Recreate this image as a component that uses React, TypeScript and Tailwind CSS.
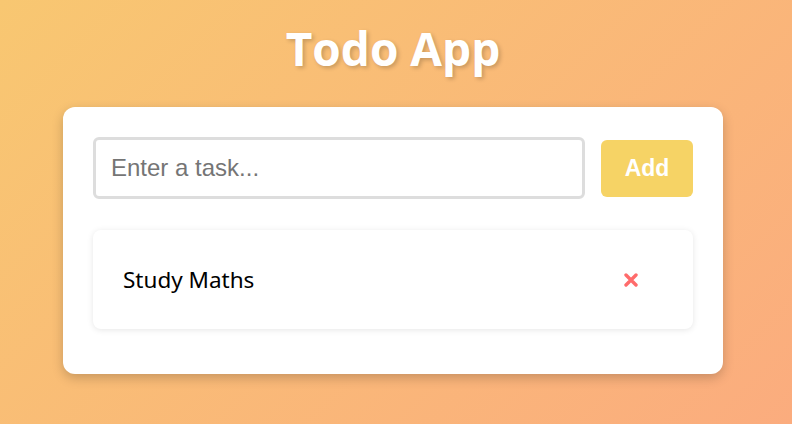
import React, { useState } from "react";

const App = () => {
  const [tasks, setTasks] = useState<string[]>(["Study Maths"]);
  const [text, setText] = useState("");

  const add = () => {
    if (!text.trim()) return;
    setTasks([...tasks, text.trim()]);
    setText("");
  };

  return (
    <div className="min-h-screen w-full bg-[linear-gradient(135deg,#f8c771,#fbac7e)] flex flex-col items-center pt-[20px] pr-[6px]">
      <h1
        className="text-white font-bold text-[46px] leading-[56px] [text-shadow:2px_2px_4px_rgba(0,0,0,0.2)]"
        style={{ fontFamily: '"Open Sans", sans-serif' }}
      >
        Todo App
      </h1>
      <div className="mt-[31px] w-[660px] bg-white rounded-[12px] shadow-[0_4px_12px_rgba(0,0,0,0.2)] px-[30px] pt-[30px] pb-[45px]">
        <div className="flex items-center gap-4">
          <input
            value={text}
            onChange={(e) => setText(e.target.value)}
            placeholder="Enter a task..."
            className="flex-1 h-[62px] border-[3px] border-[#dddddd] rounded-[6px] px-[15px] text-[24px] text-black placeholder:text-[#757575] outline-none"
            style={{ fontFamily: '"Liberation Sans", Arial, sans-serif' }}
          />
          <button
            onClick={add}
            className="w-[92px] h-[57px] bg-[#f6d365] text-white font-bold text-[23px] rounded-[6px]"
            style={{ fontFamily: '"Liberation Sans", Arial, sans-serif' }}
          >
            Add
          </button>
        </div>
        <ul className="mt-[31px] flex flex-col gap-3">
          {tasks.map((t, i) => (
            <li
              key={i}
              className="h-[99px] flex items-center justify-between pl-[30px] pr-[51px] bg-white rounded-[8px] shadow-[0_1px_6px_rgba(0,0,0,0.1)]"
            >
              <span className="text-[22.5px] text-black" style={{ fontFamily: '"Noto Sans", sans-serif' }}>
                {t}
              </span>
              <button onClick={() => setTasks(tasks.filter((_, j) => j !== i))} className="p-1">
                <svg width="14" height="14" viewBox="0 0 14 14">
                  <path d="M2 2L12 12M12 2L2 12" stroke="#ff6b6b" strokeWidth="3.4" strokeLinecap="round" />
                </svg>
              </button>
            </li>
          ))}
        </ul>
      </div>
    </div>
  );
};

export default App;
